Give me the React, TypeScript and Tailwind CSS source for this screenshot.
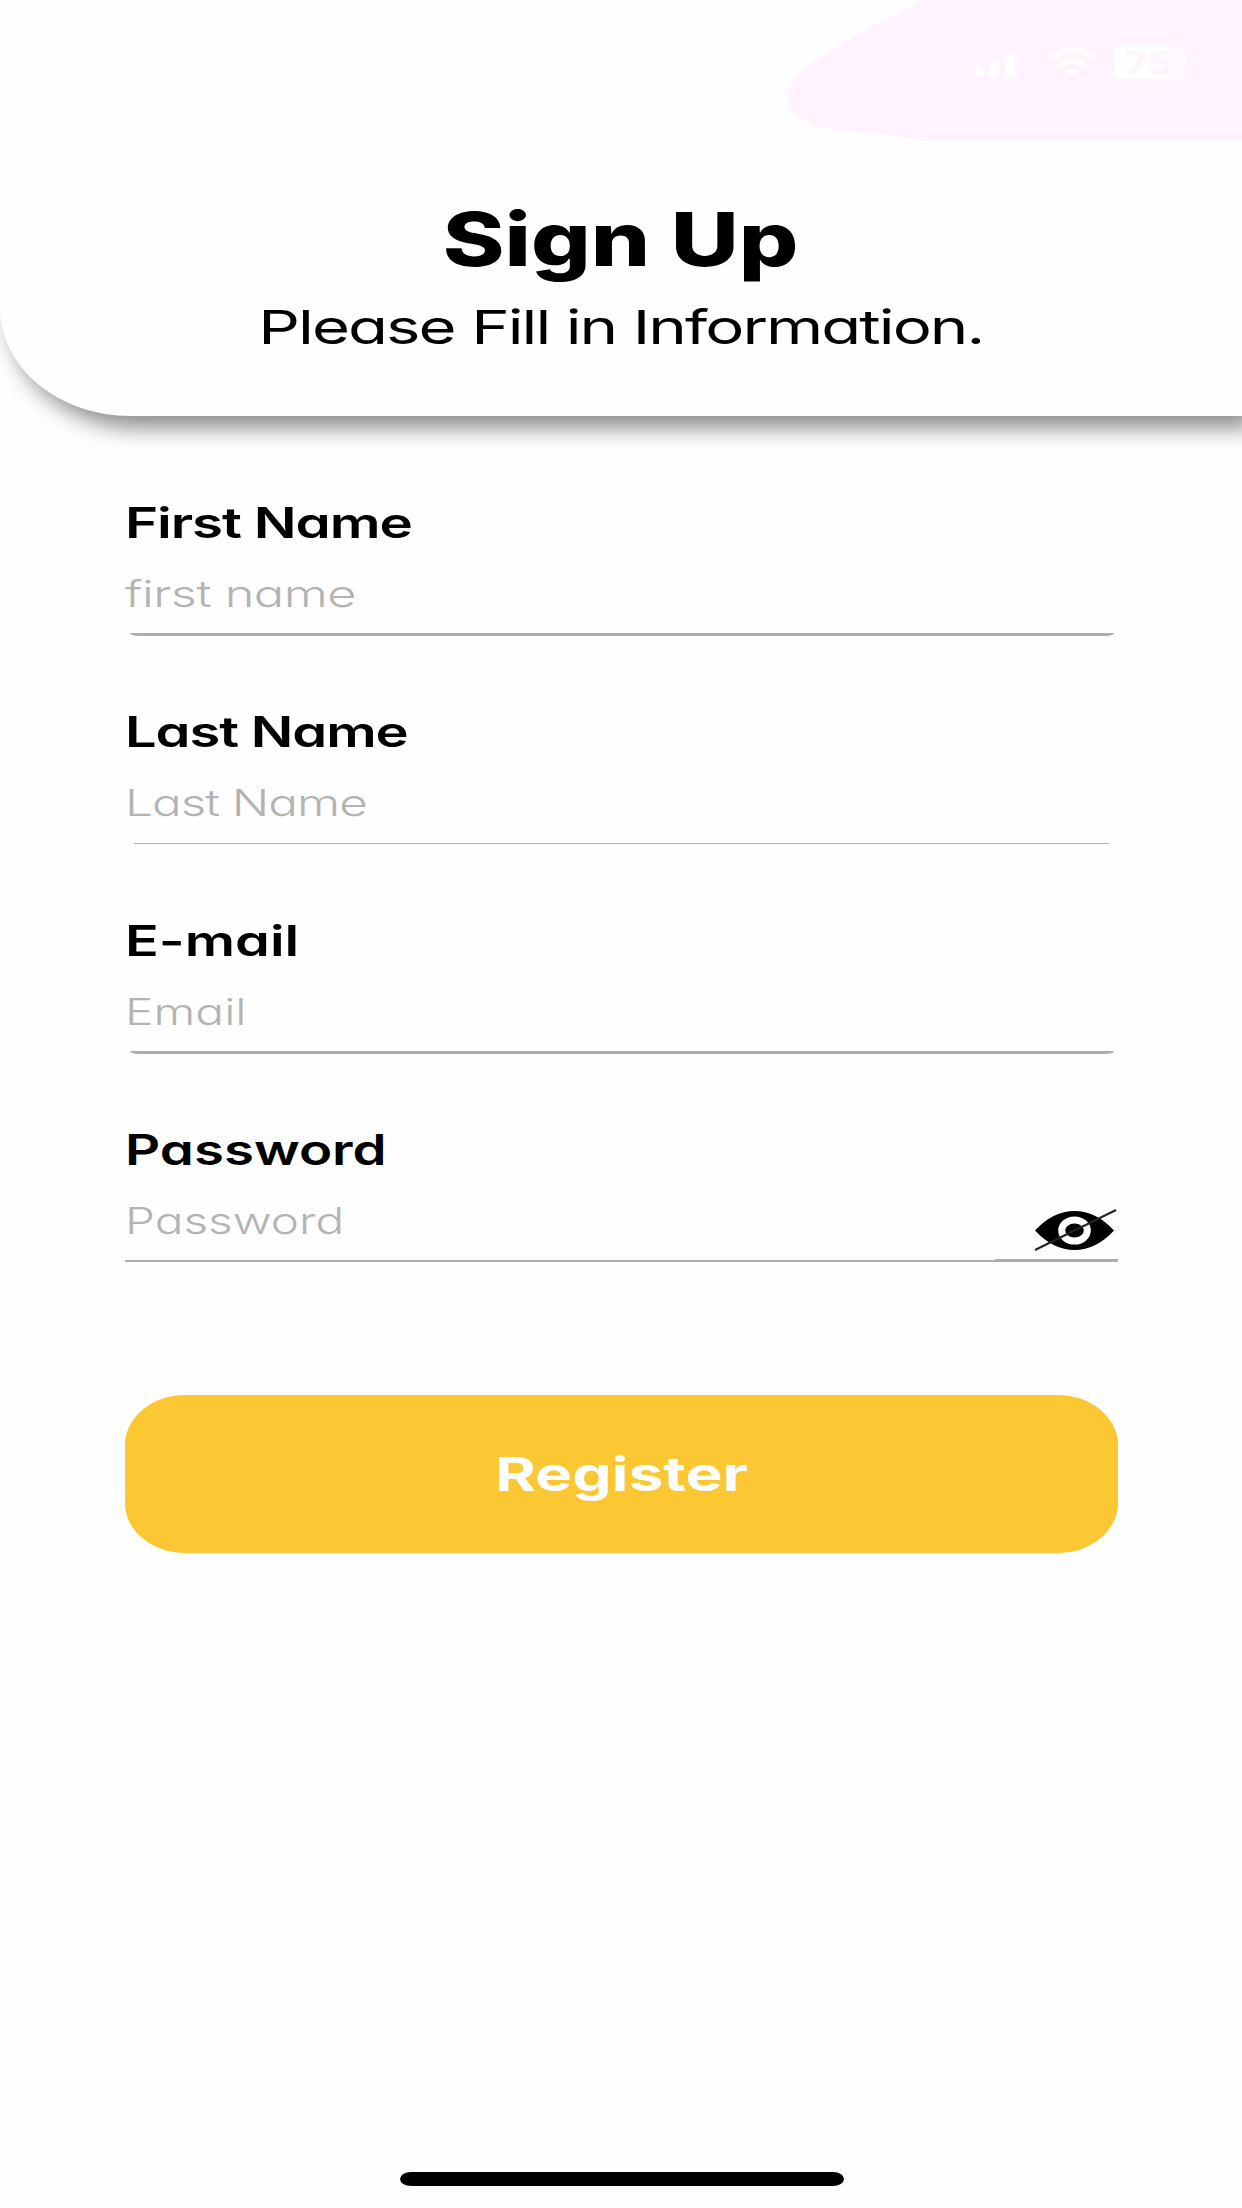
import { clsx } from 'clsx'

const fields = [
  { label: 'First Name', hint: 'first name', labelScale: 'scale-x-[1.345] tracking-[-0.02em]', hintScale: 'scale-x-[1.365] tracking-[-0.01em]', line: 'ml-[5px] mr-[4px] h-[3px] rounded-b-[8px_3px] bg-[#adadad]' },
  { label: 'Last Name', hint: 'Last Name', labelScale: 'scale-x-[1.335] tracking-[-0.02em]', hintScale: 'scale-x-[1.335] tracking-[-0.02em]', line: 'mx-[9px] mt-px h-px bg-[#b0b0b0]' },
  { label: 'E-mail', hint: 'Email', labelScale: 'scale-x-[1.33]', hintScale: 'scale-x-[1.295]', line: 'ml-[5px] mr-[4px] h-[3px] rounded-b-[8px_3px] bg-[#adadad]' },
  { label: 'Password', hint: 'Password', labelScale: 'scale-x-[1.3]', hintScale: 'scale-x-[1.29]', line: 'h-[2px] bg-[#adadad]', secret: true },
]

function StatusBar() {
  return (
    <svg className="absolute top-0 right-0" width="482" height="160" viewBox="760 0 482 160">
      <path d="M923 0C895 16 865 29 840 45C815 60 787 76 787 97C787 113 806 125 827 129C857 134 885 132 923 141H1242V0Z" fill="#fff3ff" />
      <g fill="#fff">
        <rect x="974" y="66" width="10" height="11" rx="3" />
        <rect x="989" y="61" width="10.500" height="16" rx="3" />
        <rect x="1005" y="54" width="10" height="23" rx="3" />
        <path d="M1048 56Q1072 38 1096 56L1091 60Q1072 46 1053 60Z" />
        <path d="M1056 63.500Q1072 52 1088 63.500L1083 67.500Q1072 60 1061 67.500Z" />
        <path d="M1065 71Q1072 65 1079 71L1072 77Z" />
        <path d="M1122 46H1169V79H1122Q1114 79 1114 71V54Q1114 46 1122 46Z" />
      </g>
      <path d="M1169 46H1179Q1187 46 1187 54V71Q1187 79 1179 79H1169Z" fill="#fdf9ff" />
      <path d="M1190 57Q1195 59 1195 62Q1195 65 1190 67Z" fill="#fdf9ff" />
      <text x="1125" y="74" textLength="47" lengthAdjust="spacingAndGlyphs" fill="#fff3ff" fontSize="31" fontWeight="700" className="font-['Inter',sans-serif]">75</text>
    </svg>
  )
}

function EyeOff() {
  return (
    <svg className="absolute right-px bottom-[8px]" width="84" height="44" viewBox="1034 1208 84 44">
      <path d="M1036 1230.500Q1054 1211 1075.500 1211T1115 1230.500Q1097 1250 1075.500 1250T1036 1230.500Z" fill="#000" />
      <ellipse cx="1075.500" cy="1230.500" rx="12.800" ry="10.600" fill="none" stroke="#fff" strokeWidth="7" />
      <path d="M1036 1250L1117 1210" stroke="#222" strokeWidth="2" />
    </svg>
  )
}

export default function App() {
  return (
    <main className="relative flex h-[2208px] w-[1242px] flex-col overflow-hidden bg-[#fefefe] font-['Inter','Noto_Sans',sans-serif] text-black [font-feature-settings:'cv11']">
      <header className="relative flex h-[416px] shrink-0 flex-col items-center gap-[18px] rounded-bl-[130px_108px] bg-[#fefefe] pt-[199px] shadow-[11px_12px_22px_rgba(0,0,0,0.45)]">
        <StatusBar />
        <h1 className="scale-x-[1.265] text-[74px] leading-[80px] font-extrabold whitespace-nowrap">Sign Up</h1>
        <p className="scale-x-[1.39] text-[47px] leading-[60px] tracking-[-0.03em] whitespace-nowrap">Please Fill in Information.</p>
      </header>

      <form className="flex flex-col pt-[85px] pr-[124px] pl-[125px]">
        {fields.map((field) => (
          <div key={field.label} className="flex h-[209px] flex-col">
            <label className={clsx('origin-left self-start text-[42px] leading-[44px] font-semibold whitespace-nowrap', field.labelScale)}>
              {field.label}
            </label>
            <div className="relative mt-7 flex h-[60px] items-start">
              <span className={clsx('origin-left text-[37px] leading-[41px] font-light whitespace-nowrap text-[#b3b3b3]', field.hintScale)}>
                {field.hint}
              </span>
              {field.secret && <EyeOff />}
            </div>
            <div className={field.line} />
            {field.secret && <div className="-mt-[3px] h-[3px] w-[123px] self-end bg-[#adadad]" />}
          </div>
        ))}
        <button type="button" className="mt-[58px] flex h-[158px] items-center justify-center rounded-[60px/50px] bg-[#fbc733] text-white">
          <span className="scale-x-[1.325] text-[47px] leading-[60px] font-bold">Register</span>
        </button>
      </form>

      <div className="mt-auto mb-[22px] ml-[400px] h-[14px] w-[444px] rounded-[11px/7px] bg-black" />
    </main>
  )
}
